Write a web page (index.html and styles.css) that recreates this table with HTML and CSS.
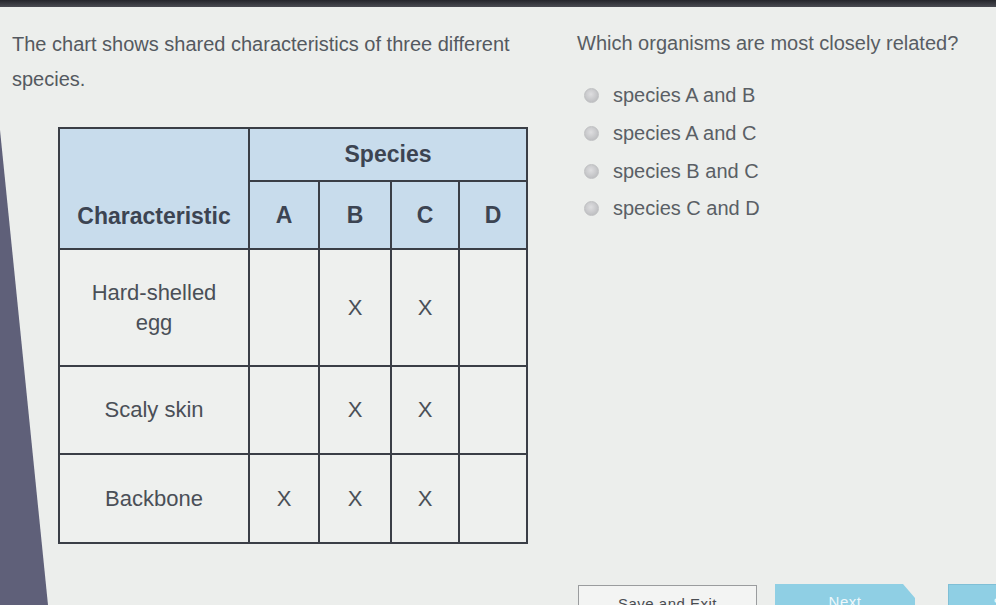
FILE: index.html
```html
<!DOCTYPE html>
<html lang="en">
<head>
<meta charset="utf-8">
<title>Question</title>
<link rel="stylesheet" href="styles.css">
</head>
<body>
<div class="topbar"></div>
<div class="bezel"></div>
<main class="page">
  <section class="left">
    <p class="prompt">The chart shows shared characteristics of three different species.</p>
    <table class="chart">
      <colgroup>
        <col class="c-char"><col class="c-a"><col class="c-b"><col class="c-c"><col class="c-d">
      </colgroup>
      <thead>
        <tr class="h1">
          <th rowspan="2" class="char-head">Characteristic</th>
          <th colspan="4">Species</th>
        </tr>
        <tr class="h2">
          <th>A</th><th>B</th><th>C</th><th>D</th>
        </tr>
      </thead>
      <tbody>
        <tr class="r1"><td class="label">Hard-shelled<br>egg</td><td></td><td>X</td><td>X</td><td></td></tr>
        <tr class="r2"><td class="label">Scaly skin</td><td></td><td>X</td><td>X</td><td></td></tr>
        <tr class="r3"><td class="label">Backbone</td><td>X</td><td>X</td><td>X</td><td></td></tr>
      </tbody>
    </table>
  </section>
  <section class="right">
    <p class="question">Which organisms are most closely related?</p>
    <ul class="options">
      <li><span class="radio"></span>species A and B</li>
      <li><span class="radio"></span>species A and C</li>
      <li><span class="radio"></span>species B and C</li>
      <li><span class="radio"></span>species C and D</li>
    </ul>
  </section>
</main>
<footer class="actions">
  <button class="btn save">Save and Exit</button>
  <button class="btn next">Next</button>
  <button class="btn submit">Submit</button>
</footer>
</body>
</html>
```
FILE: styles.css
```css
html, body {
  margin: 0;
  padding: 0;
}
body {
  width: 996px;
  height: 605px;
  overflow: hidden;
  background: #eceeec;
  font-family: "Liberation Sans", Arial, sans-serif;
  color: #555a60;
  position: relative;
}
.topbar {
  height: 7px;
  background: linear-gradient(#25262c, #4a4b52);
}
.bezel {
  position: absolute;
  left: 0;
  top: 0;
  width: 60px;
  height: 605px;
  background: #5f6079;
  clip-path: polygon(0 130px, 48px 605px, 0 605px);
}
.page {
  display: flex;
}
.left {
  width: 565px;
  padding-left: 12px;
  flex: none;
}
.prompt {
  margin: 20px 0 0 0;
  width: 520px;
  font-size: 20px;
  line-height: 35px;
  color: #545960;
}
.chart {
  margin: 30px 0 0 46px;
  border-collapse: collapse;
  table-layout: fixed;
  width: 468px;
  color: #3d434c;
}
.c-char { width: 190px; }
.c-a { width: 70px; }
.c-b { width: 72px; }
.c-c { width: 68px; }
.c-d { width: 68px; }
.chart th, .chart td {
  border: 2px solid #3a3e46;
  text-align: center;
  padding: 0;
}
.chart th {
  background: #c8dcec;
  font-size: 23px;
  font-weight: bold;
  color: #3c4452;
}
.h1 { height: 53px; }
.h2 { height: 68px; }
.char-head {
  vertical-align: bottom;
  padding-bottom: 18px !important;
}
.chart td {
  background: #eef0ee;
  font-size: 22px;
  line-height: 30px;
  color: #4a4f57;
}
.r1 { height: 117px; }
.r2 { height: 88px; }
.r3 { height: 89px; }
.question {
  margin: 21px 0 0 0;
  font-size: 20px;
  line-height: 30px;
  color: #585d63;
}
.options {
  list-style: none;
  margin: 19px 0 0 7px;
  padding: 0;
}
.options li {
  display: flex;
  align-items: center;
  height: 37.7px;
  font-size: 20px;
  color: #5a5f65;
}
.radio {
  width: 15px;
  height: 15px;
  border-radius: 50%;
  background: radial-gradient(circle at 45% 40%, #dedee0, #b4b5b8);
  border: 1px solid #bfc0c2;
  box-sizing: border-box;
  margin-right: 14px;
  flex: none;
}
.actions {
  display: flex;
  gap: 18px;
  padding-left: 578px;
  margin-top: 40px;
}
.btn {
  flex: none;
  height: 40px;
  font-family: "Liberation Sans", Arial, sans-serif;
  font-size: 15px;
  letter-spacing: 0.5px;
  padding: 9px 0 0 0;
  align-self: flex-start;
  display: flex;
  justify-content: center;
  align-items: flex-start;
}
.save {
  width: 179px;
  margin-top: 1px;
  background: #f3f4f3;
  border: 1px solid #9a9c9e;
  color: #4a4d52;
}
.next {
  width: 140px;
  border: none;
  background: #8fcfe4;
  color: #eef8fb;
  clip-path: polygon(0 0, 128px 0, 140px 14px, 140px 40px, 0 40px);
}
.submit {
  width: 140px;
  margin-left: 15px;
  border: 1px solid #7fbfd6;
  background: #8fcfe4;
  color: #eef8fb;
}
```
